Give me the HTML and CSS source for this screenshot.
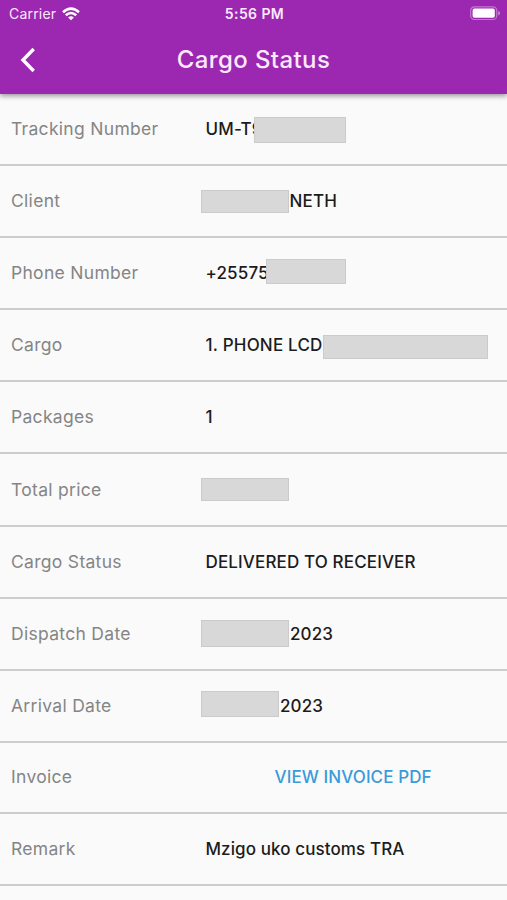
FILE: index.html
```html
<!DOCTYPE html>
<html lang="en">
<head>
<meta charset="utf-8">
<meta name="viewport" content="width=device-width, initial-scale=1">
<title>Cargo Status</title>
<link rel="stylesheet" href="styles.css">
</head>
<body>
<header class="app-bar">
  <div class="status-bar">
    <div class="carrier"><span>Carrier</span>
      <svg class="wifi" viewBox="0 0 18 14" width="18" height="14" fill="none" stroke="currentColor" stroke-width="2.5"><path d="M1 5.2Q9-2 17 5.2M3.8 8.3Q9 3.8 14.2 8.3"/><path d="M6.1 10.4Q9 8 11.9 10.4L9 13.3Z" fill="currentColor" stroke="none"/></svg>
    </div>
    <time class="clock">5:56 PM</time>
    <svg class="battery" viewBox="0 0 31 15" width="31" height="15"><rect x=".7" y=".9" width="26" height="12.6" rx="3.6" fill="none" stroke="#fff" stroke-opacity=".38" stroke-width="1.2"/><rect x="2.6" y="2.6" width="22.2" height="9.2" rx="1.8" fill="#fff"/><path d="M28.2 5v4.5q1.8-.6 1.8-2.25T28.2 5Z" fill="#fff" fill-opacity=".45"/></svg>
  </div>
  <div class="title-bar">
    <button class="back" aria-label="Back"><svg viewBox="0 0 16 26" width="16" height="26" fill="none" stroke="currentColor" stroke-width="3.4"><path d="M13.7 2 3 13l10.7 11"/></svg></button>
    <h1>Cargo Status</h1>
  </div>
</header>
<main class="details">
  <div class="row"><span class="label">Tracking Number</span><div class="value tracking"><span>UM-T9</span><i class="mask mask-tracking"></i></div></div>
  <div class="row"><span class="label">Client</span><div class="value client"><i class="mask mask-client"></i><span>NETH</span></div></div>
  <div class="row"><span class="label">Phone Number</span><div class="value phone"><span>+25575</span><i class="mask mask-phone"></i></div></div>
  <div class="row"><span class="label">Cargo</span><div class="value cargo"><span>1. PHONE LCD</span><i class="mask mask-cargo"></i></div></div>
  <div class="row"><span class="label">Packages</span><div class="value"><span>1</span></div></div>
  <div class="row"><span class="label">Total price</span><div class="value"><i class="mask mask-price"></i></div></div>
  <div class="row"><span class="label">Cargo Status</span><div class="value delivered"><span>DELIVERED TO RECEIVER</span></div></div>
  <div class="row"><span class="label">Dispatch Date</span><div class="value dispatch"><i class="mask mask-dispatch"></i><span>2023</span></div></div>
  <div class="row"><span class="label">Arrival Date</span><div class="value arrival"><i class="mask mask-arrival"></i><span>2023</span></div></div>
  <div class="row row-short"><span class="label">Invoice</span><div class="value invoice"><a>VIEW INVOICE PDF</a></div></div>
  <div class="row"><span class="label">Remark</span><div class="value remark"><span>Mzigo uko customs TRA</span></div></div>
</main>
</body>
</html>
```
FILE: styles.css
```css
* { box-sizing: border-box; }
body {
  margin: 0;
  height: 900px;
  overflow: hidden;
  background: #fafafa;
  color: #1c1c1c;
  font-family: Inter, "Liberation Sans", sans-serif;
}
.app-bar {
  position: relative;
  height: 94px;
  background: #9c27b0;
  color: #fbe9fd;
  box-shadow: 0 2px 5px rgba(0, 0, 0, .4);
}
.status-bar {
  display: grid;
  grid-template-columns: 1fr auto 1fr;
  align-items: center;
  height: 27px;
  padding: 0 6px 0 9px;
}
.carrier { display: flex; align-items: center; gap: 6px; font-size: 14px; letter-spacing: .2px; }
.wifi { color: #fff; }
.clock { margin-right: 1px; font-size: 14px; font-weight: 600; letter-spacing: .4px; }
.battery { justify-self: end; }
.title-bar {
  display: grid;
  grid-template-columns: 60px 1fr 60px;
  align-items: center;
  height: 66px;
}
.back { display: flex; padding: 0; margin-left: 19.5px; border: 0; background: none; color: #fff; }
h1 { margin: 0; text-align: center; font-size: 24px; font-weight: 500; line-height: 30px; letter-spacing: .4px; }
.row {
  display: grid;
  grid-template-columns: 194.5px 1fr;
  align-items: center;
  height: 72.1px;
  padding-left: 11px;
  border-bottom: 2px solid #cdcdcd;
  font-size: 17.5px;
  line-height: 24px;
}
.row-short { height: 71px; }
.label { color: #858585; letter-spacing: .3px; }
.value { position: relative; height: 24px; font-size: 17px; font-weight: 500; letter-spacing: .14px; white-space: nowrap; }
.client { padding-left: 84px; }
.cargo { letter-spacing: .2px; }
.dispatch { padding-left: 84.5px; }
.arrival { padding-left: 74.5px; }
.remark { letter-spacing: .1px; }
.invoice { padding-left: 69px; color: #3b9ad9; letter-spacing: .1px; }
.mask { position: absolute; background: #d8d8d8; border: 1px solid #cbcbcb; }
.mask-tracking { left: 48px; top: 0; width: 92px; height: 26px; }
.mask-client { left: -5px; top: 1px; width: 88px; height: 23px; }
.mask-phone { left: 60.5px; top: -2px; width: 80px; height: 25px; }
.mask-cargo { left: 117px; top: 2px; width: 165px; height: 24px; }
.mask-price { left: -5px; top: 0; width: 88px; height: 23px; }
.mask-dispatch { left: -5px; top: -2px; width: 88px; height: 27px; }
.mask-arrival { left: -5px; top: -3px; width: 78px; height: 26px; }
```
